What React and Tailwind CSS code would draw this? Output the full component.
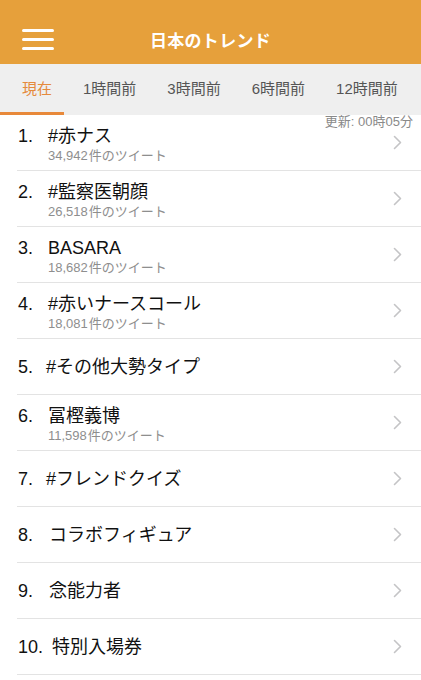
const TABS = ['現在', '1時間前', '3時間前', '6時間前', '12時間前']

const TRENDS = [
  { rank: '1.', title: '#赤ナス', count: '34,942' },
  { rank: '2.', title: '#監察医朝顔', count: '26,518' },
  { rank: '3.', title: 'BASARA', count: '18,682' },
  { rank: '4.', title: '#赤いナースコール', count: '18,081' },
  { rank: '5.', title: '#その他大勢タイプ' },
  { rank: '6.', title: '冨樫義博', count: '11,598' },
  { rank: '7.', title: '#フレンドクイズ' },
  { rank: '8.', title: 'コラボフィギュア', gap: 'w-[31px]' },
  { rank: '9.', title: '念能力者', gap: 'w-[31px]' },
  { rank: '10.', title: '特別入場券', gap: 'w-[34px]' },
]

function Chevron() {
  return (
    <svg width="9" height="15" viewBox="0 0 9 15" fill="none" aria-hidden="true">
      <polyline
        points="1.5,1.5 7.5,7.5 1.5,13.5"
        stroke="#c4c4c6"
        strokeWidth="1.6"
        strokeLinecap="round"
        strokeLinejoin="round"
      />
    </svg>
  )
}

function TrendRow({ trend, first }) {
  return (
    <div className="relative ml-[17px] flex h-[56px] items-center border-b border-[#e3e3e3] pl-[1px] pr-[19px]">
      {first && (
        <span className="absolute right-[8px] top-[-1px] text-[13px] leading-[16px] text-[#8a8a8a]">
          更新: 00時05分
        </span>
      )}
      {trend.count ? (
        <div className="flex flex-1 self-stretch pt-[10px]">
          <span className="w-[30px] text-[18px] leading-[22px] text-[#111]">{trend.rank}</span>
          <div className="flex flex-col">
            <span className="text-[18px] leading-[22px] text-[#111]">{trend.title}</span>
            <span className="text-[13px] leading-[17px] text-[#8e8e8e]">
              {trend.count}
              <span className="ml-[1px]">件のツイート</span>
            </span>
          </div>
        </div>
      ) : (
        <div className="flex flex-1 items-center">
          <span className={`${trend.gap || 'w-[28px]'} shrink-0 text-[18px] leading-[22px] text-[#111]`}>
            {trend.rank}
          </span>
          <span className="text-[18px] leading-[22px] text-[#111]">{trend.title}</span>
        </div>
      )}
      <Chevron />
    </div>
  )
}

export default function App() {
  return (
    <div
      className="h-[680px] w-[421px] overflow-hidden bg-white"
      style={{ fontFamily: '"Liberation Sans", "Noto Sans CJK JP", sans-serif' }}
    >
      <header className="relative flex h-[64px] items-center justify-center bg-[#e6a03b] pt-[19px]">
        <div className="absolute left-[22px] top-[29px] flex flex-col gap-[6px]">
          <span className="block h-[3px] w-[32px] rounded-full bg-white" />
          <span className="block h-[3px] w-[32px] rounded-full bg-white" />
          <span className="block h-[3px] w-[32px] rounded-full bg-white" />
        </div>
        <h1 className="text-[17px] font-semibold tracking-[0.3px] text-white">日本のトレンド</h1>
      </header>

      <nav className="flex h-[51px] flex-col bg-[#efefef]">
        <div className="flex flex-1 items-center gap-[31px] pl-[22px] pt-[1px]">
          {TABS.map((tab, i) => (
            <span
              key={tab}
              className={`text-[15px] leading-[20px] ${i === 0 ? 'text-[#e58a3c]' : 'text-[#555]'}`}
            >
              {tab}
            </span>
          ))}
        </div>
        <div className="h-[3px] w-[64px] bg-[#e8893a]" />
      </nav>

      <div>
        {TRENDS.map((trend, i) => (
          <TrendRow key={trend.rank} trend={trend} first={i === 0} />
        ))}
      </div>
    </div>
  )
}
